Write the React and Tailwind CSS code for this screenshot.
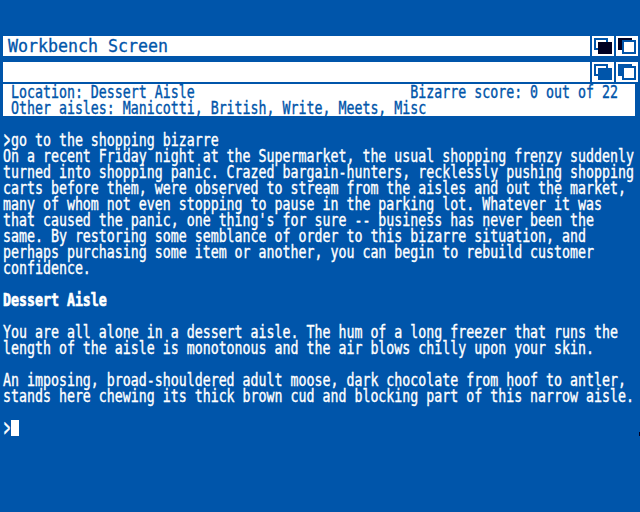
const INTRO = [
  "On a recent Friday night at the Supermarket, the usual shopping frenzy suddenly",
  "turned into shopping panic. Crazed bargain-hunters, recklessly pushing shopping",
  "carts before them, were observed to stream from the aisles and out the market,",
  "many of whom not even stopping to pause in the parking lot. Whatever it was",
  "that caused the panic, one thing's for sure -- business has never been the",
  "same. By restoring some semblance of order to this bizarre situation, and",
  "perhaps purchasing some item or another, you can begin to rebuild customer",
  "confidence.",
];
const ROOM = [
  "You are all alone in a dessert aisle. The hum of a long freezer that runs the",
  "length of the aisle is monotonous and the air blows chilly upon your skin.",
];
const MOOSE = [
  "An imposing, broad-shouldered adult moose, dark chocolate from hoof to antler,",
  "stands here chewing its thick brown cud and blocking part of this narrow aisle.",
];

function Line({ children, bold = false }) {
  return (
    <div
      className={
        "h-4 origin-[0_-2px] scale-y-[1.34] whitespace-pre text-[13.288px] leading-3 " +
        (bold ? "font-bold [-webkit-text-stroke:0.5px]" : "[-webkit-text-stroke:0.3px]")
      }
    >
      {children}
    </div>
  );
}

function Prompt() {
  return <span className="inline-block h-3 w-2 origin-center scale-x-[0.75] scale-y-[1.4]">{">"}</span>;
}

function Gadgets({ dark }) {
  return (
    <>
      <div className="w-6 border-l-2 border-[#0055aa]">
        <svg width="22" height="20" shapeRendering="crispEdges" className="block">
          <rect x="3" y="3" width="12" height="10" fill="#fff" stroke="#0055aa" strokeWidth="2" />
          <rect x="6" y="6" width="14" height="12" fill={dark} />
        </svg>
      </div>
      <div className="w-6 border-l-2 border-[#0055aa]">
        <svg width="22" height="20" shapeRendering="crispEdges" className="block">
          <rect x="2" y="2" width="14" height="12" fill={dark} />
          <rect x="7" y="5" width="12" height="12" fill="#fff" stroke="#0055aa" strokeWidth="2" />
        </svg>
      </div>
    </>
  );
}

export default function App() {
  return (
    <main className="relative h-[512px] w-[640px] overflow-hidden bg-[#0055aa] pt-9 font-['DejaVu_Sans_Mono',monospace] text-white">
      <header className="ml-[3px] flex h-5 w-[635px] bg-white text-[#0055aa]">
        <div className="flex-1 pl-[5px]">
          <div className="origin-top-left scale-y-[1.08] whitespace-pre text-[16.61px] leading-[19px] [-webkit-text-stroke:0.3px]">
            Workbench Screen
          </div>
        </div>
        <Gadgets dark="#000022" />
      </header>
      <div className="mt-1.5 ml-[3px] flex h-5 w-[635px] bg-white">
        <div className="flex-1" />
        <Gadgets dark="#0055aa" />
      </div>
      <section className="mt-0.5 ml-[3px] h-8 w-[632px] bg-white text-[#0055aa]">
        <Line>{" Location: Dessert Aisle" + " ".repeat(27) + "Bizarre score: 0 out of 22"}</Line>
        <Line> Other aisles: Manicotti, British, Write, Meets, Misc</Line>
      </section>
      <section className="mt-4 ml-[3px]">
        <Line><Prompt />go to the shopping bizarre</Line>
        {INTRO.map((text) => <Line key={text}>{text}</Line>)}
        <div className="h-4" />
        <Line bold>Dessert Aisle</Line>
        <div className="h-4" />
        {ROOM.map((text) => <Line key={text}>{text}</Line>)}
        <div className="h-4" />
        {MOOSE.map((text) => <Line key={text}>{text}</Line>)}
        <div className="h-4" />
        <div className="flex">
          <Line><Prompt /></Line>
          <div className="h-4 w-2 bg-white" />
        </div>
      </section>
      <div className="absolute right-0 top-[432px] h-1 w-px bg-[#000022]" />
    </main>
  );
}
